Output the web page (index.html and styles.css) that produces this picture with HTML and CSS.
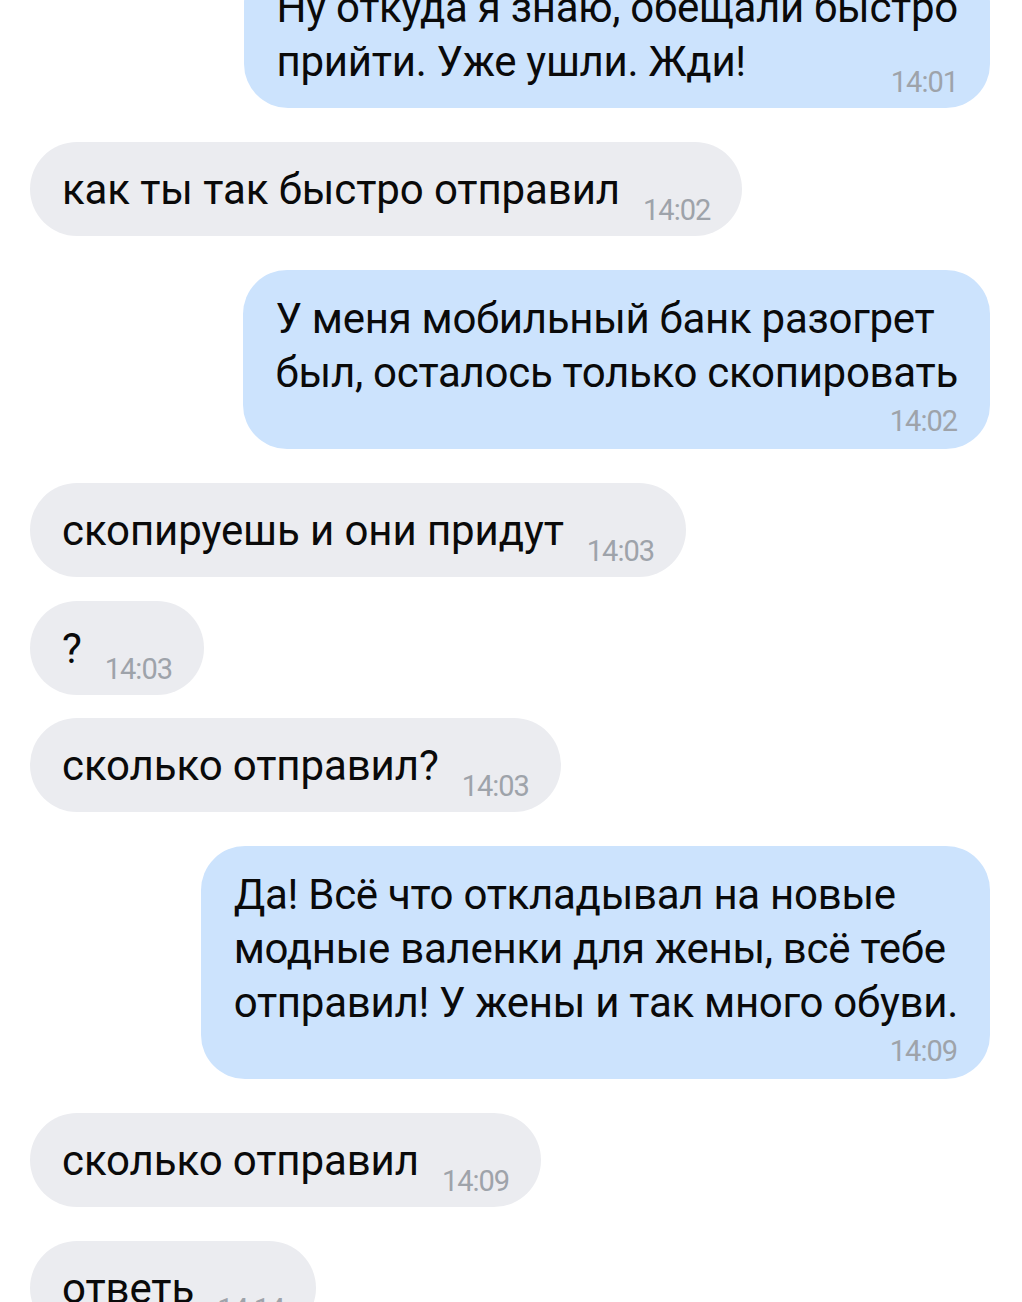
FILE: index.html
```html
<!DOCTYPE html>
<html lang="ru">
<head>
<meta charset="utf-8">
<link rel="stylesheet" href="styles.css">
</head>
<body>
<div class="chat">
  <div class="msg out">
    <div class="text">Ну откуда я знаю, обещали быстро<br><span class="last"><span class="words">прийти. Уже ушли. Жди!</span> <span class="time">14:01</span></span></div>
  </div>
  <div class="msg in diff"><span class="text">как ты так быстро отправил</span><span class="time">14:02</span></div>
  <div class="msg out diff">
    <div class="text">У меня мобильный банк разогрет<br>был, осталось только скопировать</div>
    <div class="time-row">14:02</div>
  </div>
  <div class="msg in diff"><span class="text">скопируешь и они придут</span><span class="time">14:03</span></div>
  <div class="msg in same"><span class="text">?</span><span class="time">14:03</span></div>
  <div class="msg in same"><span class="text">сколько отправил?</span><span class="time">14:03</span></div>
  <div class="msg out diff">
    <div class="text">Да! Всё что откладывал на новые<br>модные валенки для жены, всё тебе<br>отправил! У жены и так много обуви.</div>
    <div class="time-row">14:09</div>
  </div>
  <div class="msg in diff"><span class="text">сколько отправил</span><span class="time">14:09</span></div>
  <div class="msg in diff"><span class="text">ответь</span><span class="time">14:14</span></div>
</div>
</body>
</html>
```
FILE: styles.css
```css
html, body {
  margin: 0;
  padding: 0;
  background: #ffffff;
}

body {
  font-family: Roboto, "Noto Sans", "DejaVu Sans", sans-serif;
  color: #0a0a0a;
  overflow: hidden;
}

.chat {
  display: flex;
  flex-direction: column;
  padding: 0 32px 40px 30px;
  margin-top: -41px;
}

.msg {
  font-size: 42px;
  line-height: 54px;
  letter-spacing: -0.28px;
  padding: 21px 32px 19px 32px;
  white-space: nowrap;
}

.msg.in {
  align-self: flex-start;
  background: #ebecf0;
  border-radius: 47px;
  letter-spacing: -0.1px;
}

.msg.out {
  align-self: flex-end;
  background: #cce3fd;
  border-radius: 44px;
  padding: 22px 32px 19px 33px;
}

.msg.out:has(.time-row) {
  padding-bottom: 11px;
}

.diff {
  margin-top: 34px;
}

.same {
  margin-top: 23.5px;
}

.msg.out:first-child {
  margin-top: 0;
}

.time {
  font-size: 29px;
  line-height: 0;
  letter-spacing: -1px;
  color: #9ea3aa;
  vertical-align: -16px;
  margin-left: 23px;
}

.last {
  display: block;
  text-align-last: justify;
}

.last .words {
  display: inline-block;
}

.last .time {
  margin-left: 0;
}

.time-row {
  font-size: 29px;
  line-height: 34px;
  letter-spacing: -1px;
  margin-top: 4px;
  margin-right: 1px;
  text-align: right;
  color: #9ea3aa;
}
```
